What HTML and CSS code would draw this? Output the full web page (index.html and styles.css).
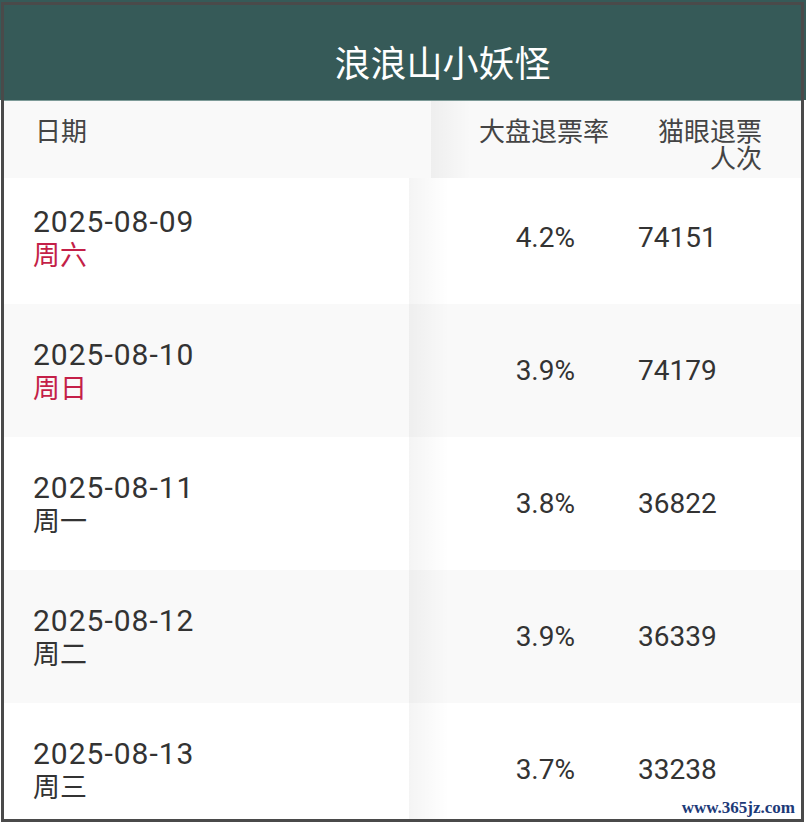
FILE: index.html
```html
<!DOCTYPE html>
<html lang="zh-CN">
<head>
<meta charset="utf-8">
<title>浪浪山小妖怪</title>
<link rel="stylesheet" href="styles.css">
</head>
<body>
<div class="frame">
  <header class="title-bar"><h1 class="title">浪浪山小妖怪</h1></header>
  <div class="row head">
    <div class="cell date-cell">日期</div>
    <div class="shade"></div>
    <div class="cell rate-cell">大盘退票率</div>
    <div class="cell count-cell">猫眼退票人次</div>
  </div>
  <div class="row first">
    <div class="cell date-cell"><div class="date">2025-08-09</div><div class="week red">周六</div></div>
    <div class="shade"></div>
    <div class="cell rate-cell">4.2%</div>
    <div class="cell count-cell">74151</div>
  </div>
  <div class="row alt">
    <div class="cell date-cell"><div class="date">2025-08-10</div><div class="week red">周日</div></div>
    <div class="shade"></div>
    <div class="cell rate-cell">3.9%</div>
    <div class="cell count-cell">74179</div>
  </div>
  <div class="row">
    <div class="cell date-cell"><div class="date">2025-08-11</div><div class="week">周一</div></div>
    <div class="shade"></div>
    <div class="cell rate-cell">3.8%</div>
    <div class="cell count-cell">36822</div>
  </div>
  <div class="row alt">
    <div class="cell date-cell"><div class="date">2025-08-12</div><div class="week">周二</div></div>
    <div class="shade"></div>
    <div class="cell rate-cell">3.9%</div>
    <div class="cell count-cell">36339</div>
  </div>
  <div class="row">
    <div class="cell date-cell"><div class="date">2025-08-13</div><div class="week">周三</div></div>
    <div class="shade"></div>
    <div class="cell rate-cell">3.7%</div>
    <div class="cell count-cell">33238</div>
  </div>
  <div class="watermark">www.365jz.com</div>
</div>
</body>
</html>
```
FILE: styles.css
```css
html, body {
  margin: 0;
  padding: 0;
}
body {
  width: 806px;
  height: 822px;
  overflow: hidden;
  background: linear-gradient(#365a58, #365a58) top left / 100% 100px no-repeat, #ffffff;
  font-family: Roboto, "Noto Sans CJK SC", sans-serif;
  color: #333333;
}
.frame {
  position: relative;
  box-sizing: border-box;
  margin: 2px 2px 0 1px;
  height: 820px;
  border: 3px solid #4a4a4a;
  overflow: hidden;
  background: #ffffff;
}
.title-bar {
  box-sizing: border-box;
  height: 96px;
  background: #365a58;
  border-bottom: 1px solid #7d9b98;
  padding: 36px 0 0 80px;
  text-align: center;
}
.title {
  margin: 0;
  font-family: "Noto Sans CJK SC", sans-serif;
  font-weight: 400;
  font-size: 36px;
  line-height: 40px;
  color: #ffffff;
}
.row {
  display: flex;
  align-items: center;
  height: 133px;
  background: #ffffff;
}
.row.alt {
  background: #f9f9f9;
}
.row.first {
  height: 126px;
}
.row.first .cell {
  margin-bottom: 7px;
}
.shade {
  align-self: stretch;
  width: 40px;
  flex: none;
  background: linear-gradient(to right, rgba(0, 0, 0, 0.045), rgba(0, 0, 0, 0));
}
.cell {
  flex: none;
  box-sizing: border-box;
}
.date-cell {
  width: 405px;
  padding-left: 29px;
}
.date {
  font-size: 30px;
  line-height: 32px;
  letter-spacing: 1px;
  color: #333333;
}
.week {
  font-family: "Noto Sans CJK SC", sans-serif;
  font-size: 27px;
  line-height: 32px;
  color: #333333;
}
.week.red {
  color: #c41f48;
}
.rate-cell {
  width: 126px;
  text-align: right;
  font-size: 28px;
  line-height: 32px;
}
.count-cell {
  padding-left: 63px;
  font-size: 28px;
  line-height: 32px;
}
.row.head {
  height: 77px;
  align-items: stretch;
  background: #f9f9f9;
  font-family: "Noto Sans CJK SC", sans-serif;
  font-size: 26px;
  line-height: 27px;
  color: #444444;
}
.row.head .cell {
  padding-top: 15px;
  font-size: 26px;
  line-height: 27px;
  color: #444444;
}
.row.head .date-cell {
  width: 427px;
  padding-left: 31px;
}
.row.head .rate-cell {
  width: 138px;
}
.row.head .count-cell {
  width: 110px;
  margin-left: 43px;
  padding-left: 0;
  text-align: right;
}
.watermark {
  position: absolute;
  right: 4px;
  bottom: 1px;
  font-family: "Liberation Serif", serif;
  font-weight: 700;
  font-size: 17px;
  line-height: 20px;
  color: #1d3a78;
  background: #ffffff;
  padding: 0 2px;
}
```
